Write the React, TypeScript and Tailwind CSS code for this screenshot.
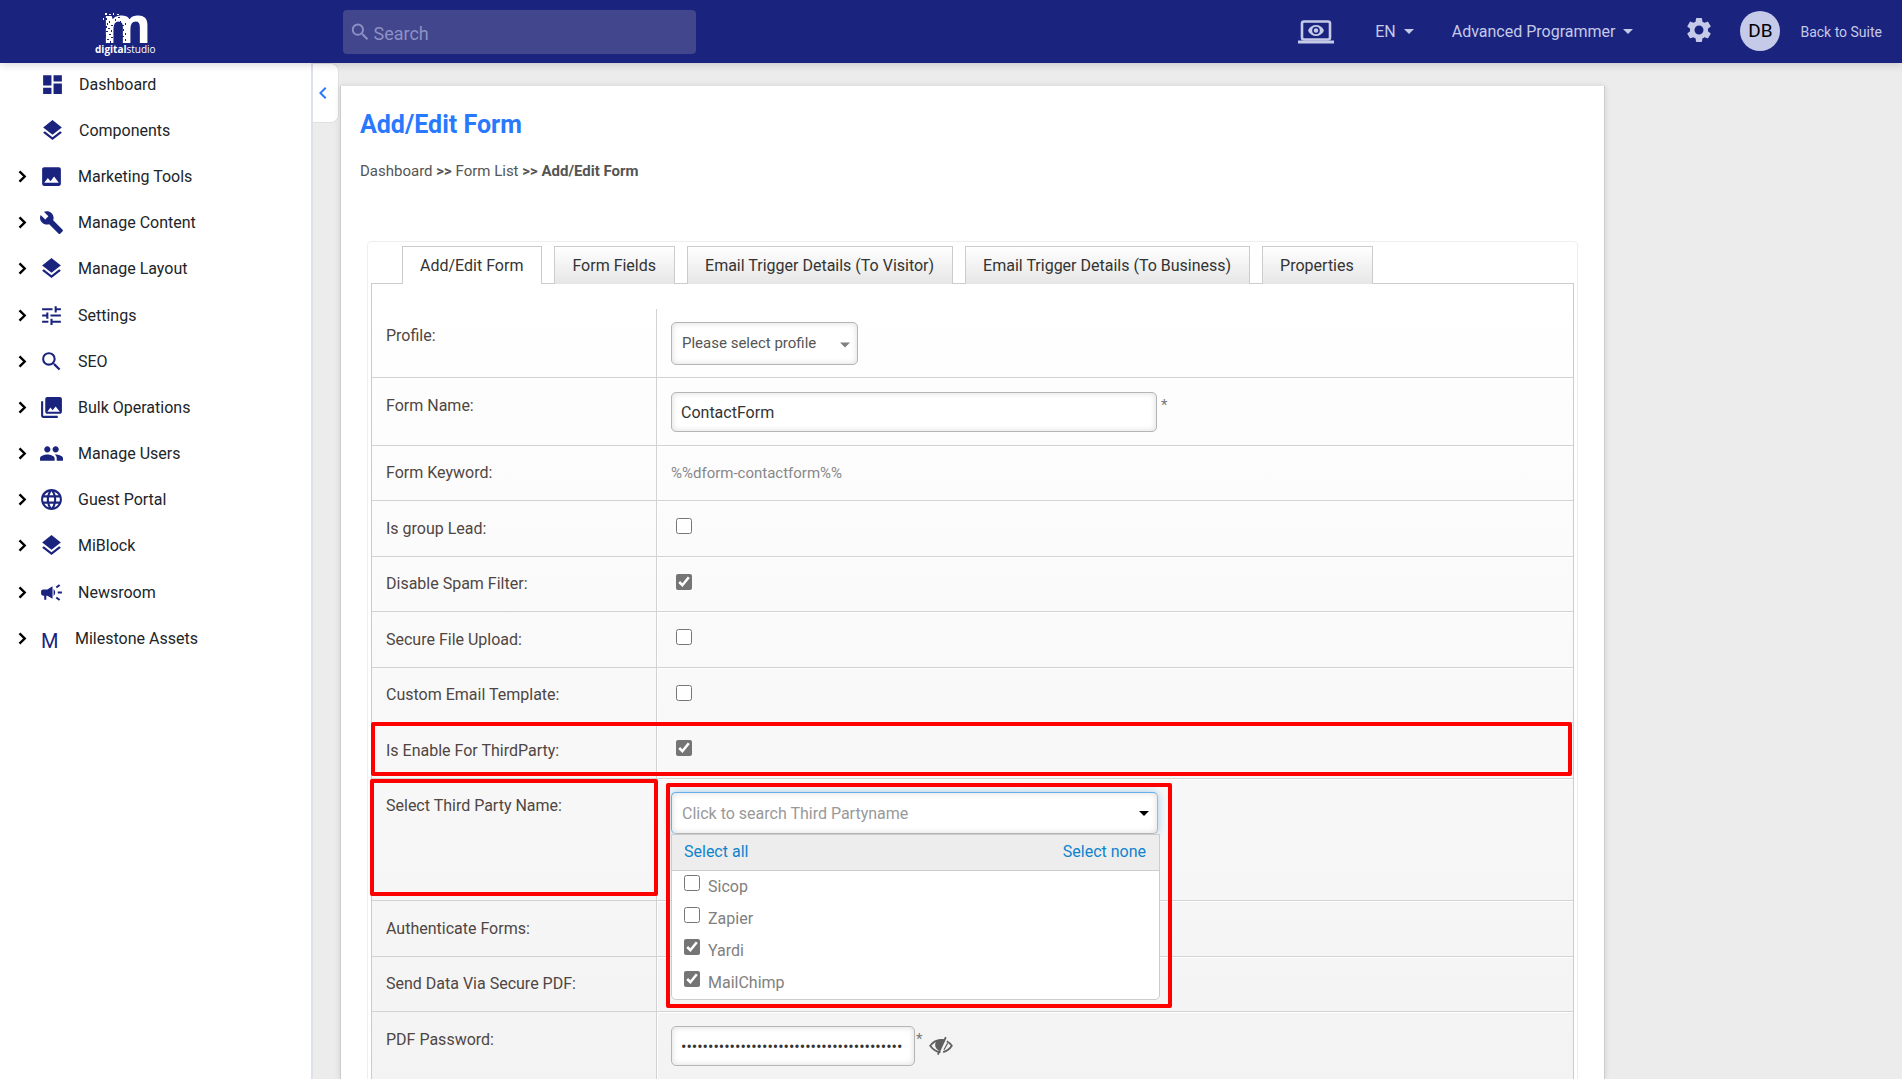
import React from 'react';
import { IconType } from 'react-icons';
import {
  MdCampaign,
  MdChevronLeft,
  MdDashboard,
  MdImage,
  MdBuild,
  MdLanguage,
  MdLayers,
  MdPeople,
  MdPhotoLibrary,
  MdSearch,
  MdSettings,
  MdTune,
} from 'react-icons/md';

interface NavItem {
  label: string;
  icon?: IconType;
  expandable?: boolean;
}

const NAV_ITEMS: NavItem[] = [
  { label: 'Dashboard', icon: MdDashboard },
  { label: 'Components', icon: MdLayers },
  { label: 'Marketing Tools', icon: MdImage, expandable: true },
  { label: 'Manage Content', icon: MdBuild, expandable: true },
  { label: 'Manage Layout', icon: MdLayers, expandable: true },
  { label: 'Settings', icon: MdTune, expandable: true },
  { label: 'SEO', icon: MdSearch, expandable: true },
  { label: 'Bulk Operations', icon: MdPhotoLibrary, expandable: true },
  { label: 'Manage Users', icon: MdPeople, expandable: true },
  { label: 'Guest Portal', icon: MdLanguage, expandable: true },
  { label: 'MiBlock', icon: MdLayers, expandable: true },
  { label: 'Newsroom', icon: MdCampaign, expandable: true },
  { label: 'Milestone Assets', expandable: true },
];

const TABS = [
  'Add/Edit Form',
  'Form Fields',
  'Email Trigger Details (To Visitor)',
  'Email Trigger Details (To Business)',
  'Properties',
];

const THIRD_PARTIES = [
  { name: 'Sicop', checked: false },
  { name: 'Zapier', checked: false },
  { name: 'Yardi', checked: true },
  { name: 'MailChimp', checked: true },
];

const inputClass =
  'h-10 rounded-[5px] border border-[#b5b5b5] bg-white px-[9px] text-base text-[#333] shadow-[inset_0_0_6px_rgba(0,0,0,0.15)] outline-none';

const Logo: React.FC = () => (
  <svg viewBox="0 0 64 40" className="h-10 w-16 overflow-visible" aria-label="digital studio">
    <text x="8" y="29" fill="#fff" fontFamily="Open Sans" fontWeight="700" fontSize="50">m</text>
    {/* worn left side of the mark */}
    <g fill="#1a237e">
      <rect x="11" y="4" width="2" height="2" />
      <rect x="15" y="7" width="1" height="2" />
      <rect x="13" y="9" width="1" height="2" />
      <rect x="17" y="11" width="2" height="1" />
      <rect x="11" y="12" width="2" height="2" />
      <rect x="14" y="14" width="2" height="1" />
      <rect x="17" y="16" width="1" height="2" />
      <rect x="12" y="17" width="2" height="1" />
      <rect x="15" y="20" width="2" height="1" />
      <rect x="11" y="21" width="1" height="2" />
      <rect x="17" y="23" width="2" height="1" />
      <rect x="13" y="25" width="2" height="1" />
      <rect x="16" y="27" width="1" height="2" />
      <rect x="21" y="5" width="1" height="2" />
      <rect x="24" y="3" width="2" height="1" />
      <rect x="26" y="7" width="1" height="2" />
      <rect x="28" y="11" width="2" height="1" />
      <rect x="31" y="9" width="1" height="2" />
      <rect x="29" y="15" width="1" height="2" />
      <rect x="31" y="19" width="1" height="2" />
      <rect x="28" y="22" width="2" height="1" />
      <rect x="31" y="25" width="1" height="2" />
    </g>
    {/* specks shed above and beside it */}
    <g fill="#fff">
      <rect x="11" y="-1" width="2" height="2" />
      <rect x="15" y="0" width="2" height="1" />
      <rect x="19" y="-1" width="1" height="2" />
      <rect x="9" y="4" width="1" height="2" />
      <rect x="23" y="0" width="2" height="1" />
    </g>
    <text x="1" y="39" fill="#fff" fontFamily="Open Sans" fontSize="10">
      <tspan fontWeight="700">digital</tspan>
      <tspan>studio</tspan>
    </text>
  </svg>
);

const PreviewIcon: React.FC = () => (
  <svg viewBox="0 0 36 24" className="h-6 w-9" fill="currentColor">
    <rect x="4" y="1.5" width="28" height="18" rx="2" fill="none" stroke="currentColor" strokeWidth="2.6" />
    <rect x="0" y="20.5" width="36" height="3" />
    <path d="M10 10.5C11.6 6.900 14.500 5 18 5s6.400 1.900 8 5.500c-1.600 3.600-4.500 5.500-8 5.500s-6.400-1.900-8-5.500z" />
    <circle cx="18" cy="10.500" r="3.800" fill="#1a237e" />
    <circle cx="18" cy="10.500" r="2.200" />
  </svg>
);

const Caret: React.FC<{ className?: string }> = ({ className }) => (
  <svg viewBox="0 0 10 5" className={className} fill="currentColor">
    <path d="M0 0h10L5 5z" />
  </svg>
);

const ExpandIcon: React.FC = () => (
  <svg viewBox="0 0 24 24" className="size-6" fill="none" stroke="#000" strokeWidth="2.4">
    <path d="M9.500 6.300l5.200 5.200-5.200 5.200" />
  </svg>
);

const EyeClosedIcon: React.FC = () => (
  <svg viewBox="0 0 24 20" className="h-5 w-6" fill="none" stroke="#5f5f5f" strokeWidth="1.800">
    <path d="M11.500 16.200C7 15.800 3.500 13 1.200 9.800 3.800 6.200 7.500 3.800 12 3.800c1 0 2 .1 2.900.4" />
    <path d="M17.800 5.200c2 1.100 3.700 2.700 5 4.600-2.100 3.300-5 5.400-8.600 6.200" />
    <path d="M8 5.500c-2 3.500-.8 6.500 2 8L15 4.500C12.500 4 9.500 4 8 5.500z" fill="#5f5f5f" />
    <path d="M16.800 1.200 8.800 18.600" />
    <path d="M18.600 7.200l-3.600 6.600" strokeWidth="1.200" />
  </svg>
);

const Header: React.FC = () => (
  <header className="relative z-20 flex h-[63px] shrink-0 items-center bg-[#1a237e] pr-5 text-[#c5cae9] shadow-[0_2px_8px_rgba(0,0,0,0.15)]">
    <a href="#" className="flex w-[343px] shrink-0 pl-[94px] pt-1">
      <Logo />
    </a>
    <label className="flex h-11 w-[353px] items-center rounded bg-[#42468c] pl-1.5 text-[#8d91c4]">
      <MdSearch className="size-6" />
      <input
        type="text"
        aria-label="Search"
        placeholder="Search"
        className="w-full bg-transparent pl-0.5 pt-1 text-lg outline-none placeholder:text-[#8d91c4]"
      />
    </label>
    <div className="ml-auto flex items-center">
      <button type="button" aria-label="Preview" className="mr-[41px]">
        <PreviewIcon />
      </button>
      <button type="button" className="mr-[38px] flex items-center gap-2 text-base">
        EN <Caret className="h-[5px] w-2.5" />
      </button>
      <button type="button" className="mr-[51px] flex items-center gap-2 text-base">
        Advanced Programmer <Caret className="h-[5px] w-2.5" />
      </button>
      <button type="button" aria-label="Settings" className="mr-[26px] pb-1">
        <MdSettings className="size-[30px]" />
      </button>
      <span className="mb-px mr-5 flex size-10 items-center justify-center rounded-full bg-[#c5cae9] text-[19px] text-black">
        DB
      </span>
      <a href="#" className="text-sm">Back to Suite</a>
    </div>
  </header>
);

const Sidebar: React.FC = () => (
  <aside className="w-[313px] shrink-0 border-r-2 border-[#dde1e8] bg-white">
    <nav className="-mt-px">
      {NAV_ITEMS.map(({ label, icon: Icon, expandable }) => (
        <a
          key={label}
          href="#"
          className={`flex h-[46px] items-center text-base text-[#212529] nth-[6n]:h-[47px] ${expandable ? 'pl-2.5' : 'pl-[11px]'}`}
        >
          <span className="w-[29px]">{expandable && <ExpandIcon />}</span>
          <span className={`flex items-center text-[#1a237e] ${Icon ? 'w-[39px] pb-px' : 'w-9'}`}>
            {Icon ? <Icon className="size-[25px]" /> : <span className="pl-0.5 pt-1 text-xl">M</span>}
          </span>
          {label}
        </a>
      ))}
    </nav>
  </aside>
);

interface RowProps {
  label: string;
  htmlFor?: string;
  className?: string;
  labelMark?: boolean;
  children?: React.ReactNode;
}

const Row: React.FC<RowProps> = ({ label, htmlFor, className = 'odd:h-[55px] even:h-14', labelMark, children }) => (
  <div className={`group relative flex border-b border-[#d2d2d2] last:border-b-0 ${className}`}>
    <div className="relative w-[285px] shrink-0 border-r border-[#d2d2d2] pl-3.5 pt-4 group-odd:pt-[15px]">
      <label htmlFor={htmlFor} className="text-base text-[#4f4643]">{label}</label>
      {labelMark && <div className="absolute -left-0.5 -right-0.5 top-0 bottom-1 rounded-xs border-4 border-[#f00]" />}
    </div>
    <div className="flex-1 border-l border-t border-white pl-[13px]">{children}</div>
  </div>
);

const CheckRow: React.FC<{ id: string; label: string; checked?: boolean; marked?: boolean }> = ({ id, label, checked, marked }) => (
  <Row label={label} htmlFor={id}>
    <input id={id} type="checkbox" defaultChecked={checked} className="ml-[5px] mt-4 block size-4 accent-[#757575]" />
    {marked && <div className="absolute -left-px right-px -top-px bottom-0.5 rounded-xs border-4 border-[#f00]" />}
  </Row>
);

const ThirdPartyPicker: React.FC = () => (
  <div className="relative mt-3 w-[489px]">
    <div className="relative w-[487px]">
      <input
        id="third-party"
        type="text"
        placeholder="Click to search Third Partyname"
        className="block h-[42px] w-full rounded-[5px] border border-[#b5b5b5] border-t-[#66afe9] border-l-[#66afe9] bg-white px-2.5 text-base shadow-[inset_0_0_6px_rgba(0,0,0,0.15),0_0_8px_rgba(102,175,233,0.6)] outline-none placeholder:text-[#999]"
      />
      <Caret className="absolute right-[9px] top-[19px] h-[5px] w-2.5 text-black" />
    </div>
    <div className="absolute left-0 top-[42px] z-10 w-full rounded-b-[5px] border border-[#ccc] bg-white">
      <div className="flex h-9 items-center justify-between border-b border-[#ccc] bg-[#ededed] pb-0.5 pl-3 pr-[13px] text-base text-[#0d83cd]">
        <a href="#">Select all</a>
        <a href="#">Select none</a>
      </div>
      {THIRD_PARTIES.map(({ name, checked }) => (
        <label key={name} className="flex h-8 items-start gap-2 pl-3 text-base text-[#808080]">
          <input type="checkbox" defaultChecked={checked} className="mt-1 size-4 accent-[#757575]" />
          <span className="pt-1">{name}</span>
        </label>
      ))}
    </div>
    <div className="pointer-events-none absolute -left-[5px] -right-3 -top-[9px] z-10 h-[225px] rounded-xs border-4 border-[#f00]" />
  </div>
);

const FormPanel: React.FC = () => (
  <form className="mx-[3px] flex flex-1 flex-col border border-b-0 border-[#ccc] bg-linear-to-b from-white to-[#f3f3f3] pt-[25px]">
    <Row label="Profile:" htmlFor="profile" className="h-[69px]">
      <div className="relative mt-3 w-[187px]">
        <select
          id="profile"
          className="h-[43px] w-full appearance-none rounded-[5px] border border-[#b5b5b5] bg-white px-2.5 text-[15px] text-[#555] shadow-[inset_0_0_6px_rgba(0,0,0,0.15)] outline-none"
        >
          <option>Please select profile</option>
        </select>
        <Caret className="pointer-events-none absolute right-2 top-5 h-1.5 w-2.5 text-[#808080]" />
      </div>
    </Row>
    <Row label="Form Name:" htmlFor="form-name" className="h-[68px]">
      <div className="mt-[13px] flex gap-1">
        <input id="form-name" type="text" defaultValue="ContactForm" className={`w-[486px] ${inputClass}`} />
        <span className="pt-0.5 text-[15px] text-[#777]">*</span>
      </div>
    </Row>
    <Row label="Form Keyword:">
      <p className="pt-3.5 text-[15px]/6 text-[#888]">%%dform-contactform%%</p>
    </Row>
    <CheckRow id="group-lead" label="Is group Lead:" />
    <CheckRow id="spam" label="Disable Spam Filter:" checked />
    <CheckRow id="secure-upload" label="Secure File Upload:" />
    <CheckRow id="email-template" label="Custom Email Template:" />
    <CheckRow id="enable-third-party" label="Is Enable For ThirdParty:" checked marked />
    <Row label="Select Third Party Name:" htmlFor="third-party" className="h-[122px]" labelMark>
      <ThirdPartyPicker />
    </Row>
    <Row label="Authenticate Forms:" />
    <Row label="Send Data Via Secure PDF:" />
    <Row label="PDF Password:" htmlFor="pdf-password" className="flex-1">
      <div className="mt-[13px] flex">
        <input
          id="pdf-password"
          type="password"
          defaultValue="formpassword-formpassword-formpassword-fo"
          className={`w-[244px] ${inputClass}`}
        />
        <span className="w-3.5 pl-px pt-0.5 text-[15px] text-[#777]">*</span>
        <button type="button" aria-label="Show password" className="h-10">
          <EyeClosedIcon />
        </button>
      </div>
    </Row>
  </form>
);

const App: React.FC = () => {
  return (
    <div className="flex min-h-screen flex-col bg-[#ececec] font-['Roboto',sans-serif]">
      <Header />
      <div className="flex flex-1">
        <Sidebar />
        <button
          type="button"
          aria-label="Collapse menu"
          className="flex h-[60px] w-[26px] shrink-0 items-center rounded-r-lg border border-l-0 border-[#e0e0e0] bg-white text-[#2979ff]"
        >
          <MdChevronLeft className="-ml-0.5 size-6" />
        </button>
        <main className="ml-px mr-[297px] mt-[23px] flex flex-1 flex-col border-x border-[#ccc] bg-white pt-[23px] shadow-[0_0_6px_rgba(0,0,0,0.12)]">
          <h1 className="pl-[19px] text-[25px]/8 font-bold text-[#2979ff]">Add/Edit Form</h1>
          <p className="mt-[18px] pl-[19px] text-[15px]/6 text-[#555]">
            <a href="#">Dashboard</a> <b>&gt;&gt;</b> <a href="#">Form List</a> <b>&gt;&gt; Add/Edit Form</b>
          </p>
          <section className="mx-[26px] mt-[58px] flex flex-1 flex-col rounded-t-[5px] border border-b-0 border-[#eee] pt-1">
            <div className="relative z-10 -mb-px flex gap-3 pl-[34px]" role="tablist">
              {TABS.map((tab, i) => (
                <button
                  key={tab}
                  type="button"
                  role="tab"
                  aria-selected={i === 0}
                  className={`h-[38px] border border-b-0 border-[#ccc] pl-[17px] pr-[18px] text-base text-[#333] ${
                    i === 0 ? 'bg-white' : 'bg-linear-to-b from-white to-[#e6e6e6]'
                  }`}
                >
                  {tab}
                </button>
              ))}
            </div>
            <FormPanel />
          </section>
        </main>
      </div>
    </div>
  );
};

export default App;
